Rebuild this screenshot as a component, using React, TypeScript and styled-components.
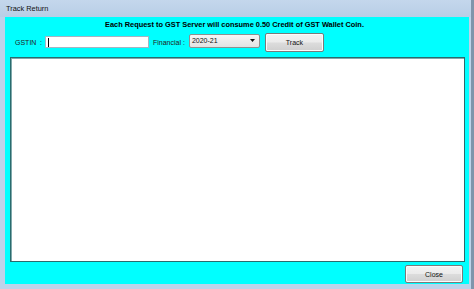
import React from "react";
import styled, { createGlobalStyle } from "styled-components";

const Global = createGlobalStyle`
  html, body { margin: 0; padding: 0; background: #bcd2e9; }
  body { font-family: "Liberation Sans", Arial, sans-serif; }
`;

const Window = styled.div`
  width: 474px;
  height: 289px;
  box-sizing: border-box;
  display: flex;
  flex-direction: column;
  background: #bdd3ea;
  border-right: 3px solid #7f95ab;
  overflow: hidden;
`;

const TitleBar = styled.div`
  height: 17px;
  flex: none;
  display: flex;
  align-items: center;
  padding-left: 6px;
  background: linear-gradient(#c4d7ec, #b8cee6);
  font-size: 7.4px;
  color: #111;
`;

const Client = styled.div`
  flex: 1;
  margin: 0 2px 5px 5px;
  background: #00ffff;
  display: flex;
  flex-direction: column;
  padding: 3px 4px 1px 5px;
  min-height: 0;
`;

const Heading = styled.div`
  height: 9px;
  line-height: 9px;
  text-align: center;
  font-weight: bold;
  font-size: 7.4px;
  color: #000;
  padding-right: 6px;
`;

const Row = styled.div`
  margin-top: 3px;
  height: 20px;
  display: flex;
  align-items: center;
  padding-left: 5px;
  font-size: 7px;
  color: #222;
`;

const Label = styled.span<{ $w?: number }>`
  width: ${(p) => (p.$w ? `${p.$w}px` : "auto")};
  flex: none;
  white-space: pre;
`;

const TextBox = styled.div`
  width: 100px;
  height: 10px;
  background: #fff;
  border: 1px solid #a6b4c2;
  display: flex;
  align-items: center;
  padding-left: 2px;
  box-sizing: content-box;
`;

const Caret = styled.span`
  width: 1px;
  height: 9px;
  background: #000;
`;

const Combo = styled.div`
  width: 71px;
  height: 14px;
  margin-left: 4px;
  margin-top: -3px;
  border: 1px solid #8e8f8f;
  border-radius: 2px;
  background: linear-gradient(#f6f6f6, #e2e2e2);
  display: flex;
  align-items: center;
  justify-content: space-between;
  padding: 0 4px 0 2px;
  box-sizing: border-box;
  font-size: 7px;
  color: #111;
`;

const Button = styled.div<{ $w: number; $h: number }>`
  width: ${(p) => p.$w}px;
  height: ${(p) => p.$h}px;
  box-sizing: border-box;
  border: 1px solid #7a7a7a;
  border-radius: 2px;
  background: linear-gradient(#f3f3f3 0%, #ebebeb 48%, #dcdcdc 52%, #cfcfcf 100%);
  box-shadow: inset 0 0 0 1px #fbfbfb;
  display: flex;
  align-items: center;
  justify-content: center;
  font-size: 7px;
  color: #111;
  flex: none;
`;

const TrackButton = styled(Button)`
  margin-left: 5px;
`;

const Output = styled.div`
  margin-top: 5px;
  flex: 1;
  background: #fff;
  border: 1px solid #2a6b6e;
  box-shadow: inset 1px 1px 0 #7fa9ab;
`;

const Footer = styled.div`
  margin-top: 3px;
  display: flex;
  justify-content: flex-end;
  padding-right: 2px;
`;

const Arrow = () => (
  <svg width="5" height="3" viewBox="0 0 5 3">
    <path d="M0 0h5L2.5 3z" fill="#111" />
  </svg>
);

export default function App() {
  return (
    <>
      <Global />
      <Window>
        <TitleBar>Track Return</TitleBar>
        <Client>
          <Heading>Each Request to GST Server will consume 0.50 Credit of GST Wallet Coin.</Heading>
          <Row>
            <Label $w={25}>GSTIN</Label>
            <Label $w={5}>:</Label>
            <TextBox>
              <Caret />
            </TextBox>
            <Label style={{ marginLeft: 4 }}>Financial :</Label>
            <Combo>
              <span>2020-21</span>
              <Arrow />
            </Combo>
            <TrackButton $w={59} $h={19}>Track</TrackButton>
          </Row>
          <Output />
          <Footer>
            <Button $w={58} $h={18}>Close</Button>
          </Footer>
        </Client>
      </Window>
    </>
  );
}
